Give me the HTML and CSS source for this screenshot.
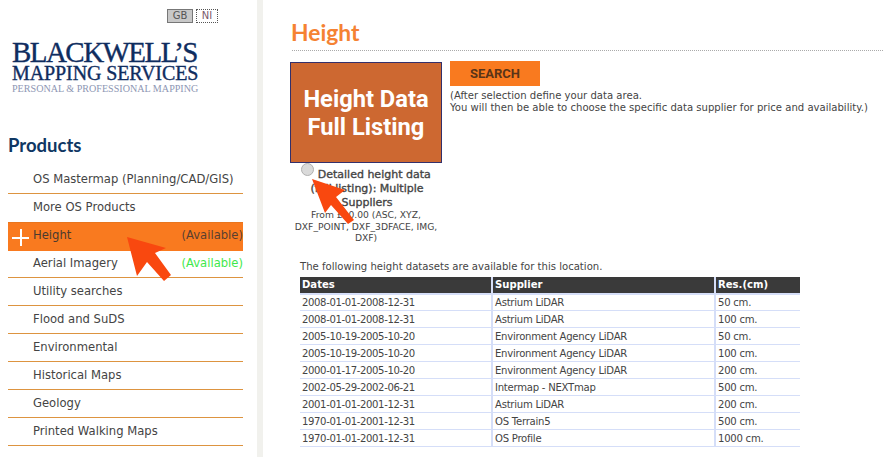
FILE: index.html
```html
<!DOCTYPE html>
<html lang="en">
<head>
<meta charset="utf-8">
<title>Height</title>
<link rel="stylesheet" href="styles.css">
</head>
<body>
<div class="page">
  <aside class="sidebar">
    <div class="lang">
      <span class="lang-btn lang-on">GB</span>
      <span class="lang-btn lang-off">NI</span>
    </div>
    <div class="logo">
      <div class="logo-1">BLACKWELL’S</div>
      <div class="logo-2">MAPPING SERVICES</div>
      <div class="logo-3">PERSONAL &amp; PROFESSIONAL MAPPING</div>
    </div>
    <h2 class="side-title">Products</h2>
    <ul class="menu">
      <li class="item"><span>OS Mastermap (Planning/CAD/GIS)</span></li>
      <li class="item item-plain"><span>More OS Products</span></li>
      <li class="item item-active"><span class="plus"></span><span>Height</span><span class="avail">(Available)</span></li>
      <li class="item"><span>Aerial Imagery</span><span class="avail avail-green">(Available)</span></li>
      <li class="item"><span>Utility searches</span></li>
      <li class="item"><span>Flood and SuDS</span></li>
      <li class="item"><span>Environmental</span></li>
      <li class="item"><span>Historical Maps</span></li>
      <li class="item"><span>Geology</span></li>
      <li class="item"><span>Printed Walking Maps</span></li>
    </ul>
  </aside>
  <main class="content">
    <h1 class="title">Height</h1>
    <div class="top">
      <div class="product">
        <div class="tile">Height Data<br>Full Listing</div>
        <div class="option"><input class="radio" type="radio"> <strong>Detailed height data (full listing): Multiple Suppliers</strong></div>
        <div class="option-note">From £10.00 (ASC, XYZ, DXF_POINT, DXF_3DFACE, IMG, DXF)</div>
      </div>
      <div class="actions">
        <button class="search" type="button">SEARCH</button>
        <p class="hint">(After selection define your data area.<br>You will then be able to choose the specific data supplier for price and availability.)</p>
      </div>
    </div>
    <p class="intro">The following height datasets are available for this location.</p>
    <table class="data">
      <thead><tr><th class="c1">Dates</th><th class="c2">Supplier</th><th class="c3">Res.(cm)</th></tr></thead>
      <tbody>
        <tr><td>2008-01-01-2008-12-31</td><td>Astrium LiDAR</td><td>50 cm.</td></tr>
        <tr><td>2008-01-01-2008-12-31</td><td>Astrium LiDAR</td><td>100 cm.</td></tr>
        <tr><td>2005-10-19-2005-10-20</td><td>Environment Agency LiDAR</td><td>50 cm.</td></tr>
        <tr><td>2005-10-19-2005-10-20</td><td>Environment Agency LiDAR</td><td>100 cm.</td></tr>
        <tr><td>2000-01-17-2005-10-20</td><td>Environment Agency LiDAR</td><td>200 cm.</td></tr>
        <tr><td>2002-05-29-2002-06-21</td><td>Intermap - NEXTmap</td><td>500 cm.</td></tr>
        <tr><td>2001-01-01-2001-12-31</td><td>Astrium LiDAR</td><td>200 cm.</td></tr>
        <tr><td>1970-01-01-2001-12-31</td><td>OS Terrain5</td><td>500 cm.</td></tr>
        <tr><td>1970-01-01-2001-12-31</td><td>OS Profile</td><td>1000 cm.</td></tr>
      </tbody>
    </table>
  </main>
</div>
<svg class="arrows" width="883" height="457" viewBox="0 0 883 457" aria-hidden="true">
  <polygon points="127,237 166,248 155,253 171,275 164,281 147,262 137,276" fill="#f9480f"/>
  <polygon points="312,179 345,190 336,197 354,220 348,224 331,205 325,213" fill="#f9480f"/>
</svg>
</body>
</html>
```
FILE: styles.css
```css
* { box-sizing: border-box; }
html, body { margin: 0; padding: 0; background: #fff; }
body {
  font-family: "DejaVu Sans", sans-serif;
  color: #444;
  font-size: 10px;
  overflow: hidden;
  height: 457px;
}
.page { display: flex; height: 457px; }
.sidebar {
  width: 263px;
  flex: none;
  padding: 9px 0 0 8px;
  border-right: 6px solid #f1f1ed;
}
.lang { display: flex; gap: 3px; margin-left: 159px; height: 14px; }
.lang-btn {
  height: 14px;
  font-size: 10px;
  line-height: 12px;
  text-align: center;
  color: #555;
}
.lang-on { width: 26px; background: #c8c8c8; border: 1px solid #777; }
.lang-off { width: 22px; border: 1px dotted #555; color: #7a5a6a; }
.logo {
  margin: 17px 0 0 4px;
  color: #0f2d5f;
  font-family: "Liberation Serif", serif;
  white-space: nowrap;
  -webkit-text-stroke: .35px #0f2d5f;
}
.logo-1 { font-size: 29px; line-height: 24px; height: 24px; letter-spacing: -1.55px; }
.logo-2 { font-size: 20px; line-height: 17px; height: 17px; margin-top: 1px; letter-spacing: -.1px; }
.logo-3 { font-size: 10.1px; line-height: 10px; margin-top: 2px; color: #8d96b3; -webkit-text-stroke: 0; }
.side-title {
  margin: 41px 0 0;
  font: bold 18.5px/20px "Lato", sans-serif;
  color: #0f3763;
}
.menu { list-style: none; margin: 11px 0 0; padding: 0; width: 235px; }
.item {
  display: flex;
  justify-content: space-between;
  align-items: center;
  height: 28px;
  padding: 0 0 1px 25px;
  font-size: 11.6px;
  border-bottom: 1px solid #dd9440;
  position: relative;
}
.item-plain { border-bottom-color: transparent; }
.item-active { background: #f97a1f; border-top: 1px solid #e8761f; border-bottom-color: #f97a1f; color: #4a3a30; height: 29px; margin-bottom: -1px; padding-bottom: 3px; }
.avail { color: #5a4030; }
.avail-green { color: #3fe84b; }
.plus {
  position: absolute;
  left: 4px;
  top: 6px;
  width: 17px;
  height: 17px;
  background:
    linear-gradient(#fff, #fff) center / 17px 2px no-repeat,
    linear-gradient(#fff, #fff) center / 2px 17px no-repeat;
}
.content { flex: 1; padding: 17px 0 0 29px; min-width: 0; }
.title {
  margin: 0;
  height: 34px;
  font: bold 22.8px/30px "Lato", sans-serif;
  color: #f58232;
  text-indent: -1px;
  border-bottom: 1px dotted #aaa;
}
.top { display: flex; margin-top: 11px; margin-left: -2px; }
.product { width: 152px; flex: none; text-align: center; }
.tile {
  width: 152px;
  height: 101px;
  background: #cd6831;
  border: 1px solid #33306b;
  color: #fff;
  font: bold 23.7px/28px "Roboto", sans-serif;
  padding-top: 22px;
}
.option { margin: 0 3px -1px 5px; font-size: 11px; line-height: 14px; }
.option strong { font-weight: normal; -webkit-text-stroke: .35px #444; }
.radio { width: 13px; height: 13px; margin: 0 0 0 -2px; vertical-align: 2px; appearance: none; border: 1px solid #b0b0b0; border-radius: 50%; background: #dadada; }
.option-note { margin: 0; font-size: 9.2px; line-height: 11.5px; }
.actions { margin-left: 8px; margin-top: -1px; }
.search {
  display: block;
  width: 90px;
  height: 25px;
  border: 0;
  background: #f97a1f;
  color: #5a3418;
  font: bold 13px "Roboto", sans-serif;
  padding: 0;
}
.hint { margin: 4px 0 0; font-size: 10.08px; line-height: 11.5px; white-space: nowrap; }
.intro { margin: 16px 0 0 8px; font-size: 10.08px; line-height: 13px; white-space: nowrap; }
.data { margin: 4px 0 0 8px; border-collapse: collapse; table-layout: fixed; width: 500px; font-size: 10.08px; }
.data th {
  background: #3a3a3a;
  color: #fff;
  text-align: left;
  font-weight: bold;
  height: 17px;
  padding: 0 2px;
  border-bottom: 2px solid #d5def8;
  line-height: 15px;
}
.data th + th, .data td + td { border-left: 2px solid #d5def8; }
.data td {
  height: 17px;
  padding: 0 2px;
  line-height: 15px;
  border-top: 1px solid #d5def8;
  border-bottom: 1px solid #d5def8;
  white-space: nowrap;
  letter-spacing: -.25px;
}
.data td:first-child { letter-spacing: -.38px; }
.c1 { width: 192px; }
.c2 { width: 223px; }
.c3 { width: 85px; }
.arrows { position: absolute; left: 0; top: 0; pointer-events: none; }
```
